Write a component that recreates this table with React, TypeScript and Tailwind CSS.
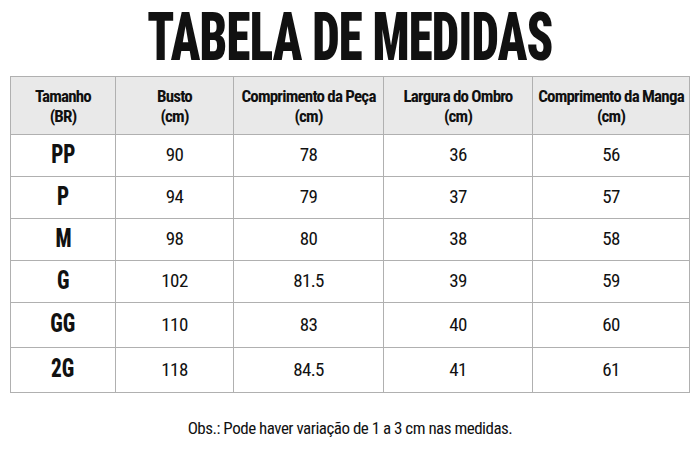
const headers = [
  ["Tamanho", "(BR)"],
  ["Busto", "(cm)"],
  ["Comprimento da Peça", "(cm)"],
  ["Largura do Ombro", "(cm)"],
  ["Comprimento da Manga", "(cm)"],
];

const rows = [
  ["PP", "90", "78", "36", "56"],
  ["P", "94", "79", "37", "57"],
  ["M", "98", "80", "38", "58"],
  ["G", "102", "81.5", "39", "59"],
  ["GG", "110", "83", "40", "60"],
  ["2G", "118", "84.5", "41", "61"],
];

export default function App() {
  return (
    <div className="w-[700px] h-[467px] bg-white text-[#111] font-['Roboto_Condensed',_'Roboto',_sans-serif] flex flex-col items-center">
      <h1 className="mt-[5px] h-[66px] flex items-center text-[66px] leading-none font-black tracking-[-1px] uppercase scale-x-[0.74]">
        Tabela de Medidas
      </h1>
      <table className="mt-[5px] w-[679px] border-collapse table-fixed">
        <colgroup>
          <col className="w-[105px]" />
          <col className="w-[118px]" />
          <col className="w-[150px]" />
          <col className="w-[149px]" />
          <col className="w-[157px]" />
        </colgroup>
        <thead>
          <tr className="h-[58px] bg-[#e9e9e9]">
            {headers.map((h) => (
              <th key={h[0]} className="border border-[#b0b0b0] text-[17px] leading-[20px] font-bold tracking-[-0.8px] text-center align-middle">
                {h[0]}
                <br />
                {h[1]}
              </th>
            ))}
          </tr>
        </thead>
        <tbody>
          {rows.map((r, i) => (
            <tr key={r[0]} className={i < 4 ? "h-[42px]" : "h-[45px]"}>
              {r.map((c, j) =>
                j === 0 ? (
                  <td key={j} className="border border-[#b0b0b0] text-center">
                    <span className="inline-block text-[25px] leading-none font-extrabold scale-x-[0.85]">{c}</span>
                  </td>
                ) : (
                  <td key={j} className="border border-[#b0b0b0] text-center text-[19px] tracking-[-0.6px]">
                    {c}
                  </td>
                )
              )}
            </tr>
          ))}
        </tbody>
      </table>
      <p className="mt-[27px] text-[17px] leading-none tracking-[-0.5px]">
        Obs.: Pode haver variação de 1 a 3 cm nas medidas.
      </p>
    </div>
  );
}
